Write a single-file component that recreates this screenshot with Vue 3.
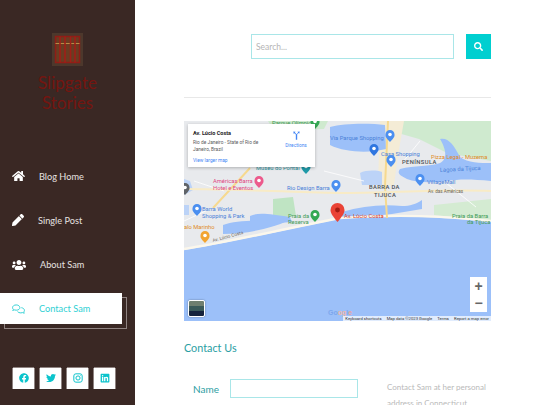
<template>
  <div class="page">
    <!-- Sidebar -->
    <aside class="side">
      <div class="logo">
        <svg viewBox="0 0 31 33" width="31" height="33" aria-hidden="true">
          <rect width="31" height="33" fill="#4d382c" />
          <rect x="3.500" y="3.500" width="24" height="26" fill="#6a3c22" stroke="#8f1d16" stroke-width="1.500" />
          <path d="M3.500 10.500h24" stroke="#b98a45" stroke-width="1" />
          <path d="M8 3.500v26M13 3.500v26M18.500 3.500v26M23 3.500v26" stroke="#a01f18" stroke-width="1.600" />
        </svg>
      </div>
      <h1 class="brand">Slipgate<br />Stories</h1>

      <nav class="nav">
        <a v-for="item in navItems" :key="item.label" class="nav-item" :class="{ 'nav-item--active': item.active }">
          <svg class="nav-icon" :viewBox="item.box" :style="{ width: item.w + 'px' }" aria-hidden="true">
            <path v-if="item.d" :d="item.d" fill="currentColor" />
            <g v-else fill="none" stroke="currentColor" stroke-width="48">
              <path d="M208 56C100 56 28 112 28 190c0 34 16 62 40 84-6 22-18 38-34 54 32-2 60-14 80-28 28 10 60 14 94 14 108 0 180-56 180-124S316 56 208 56z" />
              <path d="M460 190c90 14 152 70 152 134 0 34-16 62-40 84 6 22 18 38 34 54-32-2-60-14-80-28-28 10-60 14-94 14-70 0-130-24-160-64" />
            </g>
          </svg>
          <span>{{ item.label }}</span>
        </a>
      </nav>

      <div class="socials">
        <a class="social"><svg viewBox="0 0 512 512"><path :d="icons.facebook" /></svg></a>
        <a class="social"><svg viewBox="0 0 512 512"><path :d="icons.twitter" /></svg></a>
        <a class="social">
          <svg viewBox="0 0 24 24" class="insta">
            <rect x="2" y="2" width="20" height="20" rx="5" />
            <circle cx="12" cy="12" r="5" />
            <circle cx="18" cy="6" r="1" class="insta-dot" />
          </svg>
        </a>
        <a class="social"><svg viewBox="0 0 448 512"><path :d="icons.linkedin" /></svg></a>
      </div>
    </aside>

    <!-- Main column -->
    <main class="main">
      <form class="search" @submit.prevent>
        <input class="search-input" type="text" placeholder="Search..." />
        <button class="search-btn" type="submit" aria-label="Search">
          <svg viewBox="0 0 512 512"><path :d="icons.search" /></svg>
        </button>
      </form>

      <hr class="rule" />

      <div class="map">
        <svg class="map-art" viewBox="0 0 307 200" width="307" height="200">
          <rect width="307" height="200" fill="#e8eaed" />
          <!-- green -->
          <path d="M214 0h93v40l-44-8-28-14-21-6z" fill="#cfeacf" />
          <path d="M84 0h60l-4 8-50 2z" fill="#cfeacf" />
          <path d="M89 78l20-2 3 19-23 2z" fill="#bfe4c3" />
          <path d="M250 84l57-6v22l-57-6z" fill="#d4ebd2" />
          <!-- sand -->
          <path d="M196 0h24l-6 34-4 30h-16z" fill="#f4ecd6" />
          <!-- lagoons -->
          <path d="M146 6c14-4 40-4 55-2l1 24c-15 4-40 4-56-4z" fill="#9cc0f9" />
          <path d="M216 48c14-4 30-2 40-6 8-4 6-14 0-24 8-2 14 6 20 18 8 6 20 6 31 6v18c-20-2-32-2-44 0-14 2-30 2-40-2-8-4-10-6-7-10z" fill="#9cc0f9" />
          <path d="M176 52c6-3 16-3 22-1v13h-20z" fill="#bcd3f7" />
          <path d="M158 91c20-6 40-8 60-6 8 0 14-2 20-6v9l-30 5c-20 2-30 2-50 5z" fill="#9cc0f9" />
          <path d="M66 95c8-4 20-2 40 1l2 5-42 3z" fill="#9cc0f9" />
          <path d="M39 104c14-5 40-5 64-4-14 7-40 13-64 13z" fill="#9cc0f9" />
          <path d="M0 58l6 2 3 9-9 5zM0 84h5v10H0z" fill="#bcd3f7" />
          <!-- ocean -->
          <path d="M0 129c40-6 90-18 156-31 60-4 100-2 151 3v99H0z" fill="#9cc0f9" />
          <path d="M0 128c40-6 90-18 156-31 60-4 100-2 151 3" fill="none" stroke="#fbf7ec" stroke-width="2.400" />
          <!-- roads -->
          <path d="M204 0l-3 65 2 32M29 87l37-40" fill="none" stroke="#f6d98f" stroke-width="2" />
          <path d="M0 68c50 0 100 3 156 4 50 0 100-4 151-2" fill="none" stroke="#f8ebc6" stroke-width="2" />
          <path d="M10 60l30 10M0 100l26-12M140 50l40 10M236 20l-18 22M262 62l30 24" fill="none" stroke="#fff" stroke-width="0.800" />

          <g class="map-labels">
            <text x="88" y="4" class="green">Parque Olímpico</text>
            <text x="146" y="19" class="blue">Via Parque Shopping</text>
            <text x="72" y="49" class="teal">Museu do Pontal</text>
            <text x="29" y="62" class="pink">Américas Barra</text>
            <text x="29" y="68.500" class="pink">Hotel e Eventos</text>
            <text x="103" y="69" class="blue">Rio Design Barra</text>
            <text x="18" y="90" class="blue">Barra World</text>
            <text x="18" y="96.500" class="blue">Shopping &amp; Park</text>
            <text x="104" y="97" class="green">Praia da</text>
            <text x="104" y="103" class="green">Reserva</text>
            <text x="0" y="108" class="orange">alo Marinho</text>
            <text x="197" y="35" class="blue">Casa Shopping</text>
            <text x="218" y="43" class="dark bold">PENÍNSULA</text>
            <text x="247" y="38" class="orange">Pizza Legal - Muzema</text>
            <text x="256" y="51" class="blue" transform="rotate(-3 256 51)">Lagoa da Tijuca</text>
            <text x="243" y="63" class="blue">VillageMall</text>
            <text x="185" y="68" class="dark bold">BARRA DA</text>
            <text x="190" y="75.500" class="dark bold">TIJUCA</text>
            <text x="244" y="72" class="road">Av. das Américas</text>
            <text x="160" y="97" class="red">Av. Lúcio Costa</text>
            <text x="268" y="97" class="green">Praia da Barra</text>
            <text x="283" y="103" class="green">da Tijuca</text>
            <text x="29" y="121" class="road" transform="rotate(-15 29 121)">Av. Lúcio Costa</text>
          </g>

          <!-- pins -->
          <g v-for="p in pins" :key="p.x + '-' + p.y">
            <path :d="`M${p.x} ${p.y + 6}c-5-5-4.500-6-4.500-7.500a4.500 4.500 0 0 1 9 0c0 1.500 .5 2.500-4.500 7.500z`" :fill="p.c" />
            <circle :cx="p.x" :cy="p.y - 1.500" r="1.800" fill="#fff" />
          </g>
          <path d="M153.500 101c-5-6-7-9-7-12a7 7 0 0 1 14 0c0 3-2 6-7 12z" fill="#ea4335" />
          <circle cx="153.500" cy="89" r="2.400" fill="#a51d12" />
        </svg>

        <div class="place-card">
          <div class="place-info">
            <p class="place-name">Av. Lúcio Costa</p>
            <p class="place-addr">Rio de Janeiro - State of Rio de Janeiro, Brazil</p>
            <a class="place-link">View larger map</a>
          </div>
          <a class="directions">
            <svg viewBox="0 0 24 24" width="11" height="11"><path d="M5 3l5 1-1.500 1.500 3.500 3.500 3.500-3.500L14 4l5-1-1 5-1.500-1.500-3 3V21h-3V10l-3-3L6 8.500z" fill="#4285f4" /></svg>
            <span>Directions</span>
          </a>
        </div>

        <div class="thumb"></div>
        <div class="google"><span style="color:#7da7ee">Go</span><span style="color:#efb6a6">og</span><span style="color:#7da7ee">l</span><span style="color:#e8a29a">e</span></div>

        <div class="zoom-ctrl">
          <span class="zoom-btn">+</span>
          <span class="zoom-btn">−</span>
        </div>

        <div class="attrib">
          <span>Keyboard shortcuts</span>
          <span>Map data ©2023 Google</span>
          <span>Terms</span>
          <span>Report a map error</span>
        </div>
      </div>

      <h2 class="contact-title">Contact Us</h2>

      <div class="contact">
        <label class="field">
          <span class="field-label">Name</span>
          <input class="field-input" type="text" />
        </label>
        <p class="contact-note">Contact Sam at her personal address in Connecticut</p>
      </div>
    </main>
  </div>
</template>

<script setup>
const icons = {
  home: "M280.37 148.26L96 300.11V464a16 16 0 0 0 16 16l112.06-.29a16 16 0 0 0 15.92-16V368a16 16 0 0 1 16-16h64a16 16 0 0 1 16 16v95.64a16 16 0 0 0 16 16.05L464 480a16 16 0 0 0 16-16V300L295.67 148.26a12.19 12.19 0 0 0-15.3 0zM571.6 251.47L488 182.56V44.05a12 12 0 0 0-12-12h-56a12 12 0 0 0-12 12v72.61L318.47 43a48 48 0 0 0-61 0L4.34 251.47a12 12 0 0 0-1.6 16.9l25.5 31A12 12 0 0 0 45.15 301l235.22-193.74a12.19 12.19 0 0 1 15.3 0L530.9 301a12 12 0 0 0 16.9-1.6l25.5-31a12 12 0 0 0-1.7-16.93z",
  pen: "M497.9 142.1l-46.1 46.1c-4.7 4.7-12.3 4.7-17 0l-111-111c-4.7-4.7-4.7-12.3 0-17l46.1-46.1c18.7-18.7 49.1-18.7 67.9 0l60.1 60.1c18.8 18.7 18.8 49.1 0 67.9zM284.2 99.8L21.6 362.4.4 483.9c-2.9 16.4 11.4 30.6 27.8 27.8l121.5-21.3 262.6-262.6c4.7-4.7 4.7-12.3 0-17l-111-111c-4.8-4.7-12.4-4.7-17.1 0z",
  users: "M96 224c35.3 0 64-28.7 64-64s-28.7-64-64-64-64 28.7-64 64 28.7 64 64 64zm448 0c35.3 0 64-28.7 64-64s-28.7-64-64-64-64 28.7-64 64 28.7 64 64 64zm32 32h-64c-17.6 0-33.5 7.1-45.1 18.6 40.3 22.1 68.9 62 75.1 109.4h66c17.7 0 32-14.3 32-32v-32c0-35.3-28.7-64-64-64zm-256 0c61.9 0 112-50.1 112-112S381.9 32 320 32 208 82.1 208 144s50.1 112 112 112zm76.8 32h-8.3c-20.8 10-43.9 16-68.5 16s-47.6-6-68.5-16h-8.3C179.6 288 128 339.6 128 403.2V432c0 26.5 21.5 48 48 48h288c26.5 0 48-21.5 48-48v-28.8c0-63.6-51.6-115.2-115.2-115.2zm-223.7-13.4C161.5 263.1 145.6 256 128 256H64c-35.3 0-64 28.7-64 64v32c0 17.7 14.3 32 32 32h65.9c6.3-47.4 34.9-87.3 75.2-109.4z",
  facebook: "M504 256C504 119 393 8 256 8S8 119 8 256c0 123.78 90.69 226.38 209.25 245V327.69h-63V256h63v-54.64c0-62.15 37-96.48 93.67-96.48 27.14 0 55.52 4.84 55.52 4.84v61h-31.28c-30.8 0-40.41 19.12-40.41 38.73V256h68.78l-11 71.69h-57.78V501C413.31 482.38 504 379.78 504 256z",
  twitter: "M459.37 151.716c.325 4.548.325 9.097.325 13.645 0 138.72-105.583 298.558-298.558 298.558-59.452 0-114.68-17.219-161.137-47.106 8.447.974 16.568 1.299 25.34 1.299 49.055 0 94.213-16.568 130.274-44.832-46.132-.975-84.792-31.188-98.112-72.772 6.498.974 12.995 1.624 19.818 1.624 9.421 0 18.843-1.3 27.614-3.573-48.081-9.747-84.143-51.98-84.143-102.985v-1.299c13.969 7.797 30.214 12.67 47.431 13.319-28.264-18.843-46.781-51.005-46.781-87.391 0-19.492 5.197-37.36 14.294-52.954 51.655 63.675 129.3 105.258 216.365 109.807-1.624-7.797-2.599-15.918-2.599-24.04 0-57.828 46.782-104.934 104.934-104.934 30.213 0 57.502 12.67 76.67 33.137 23.715-4.548 46.456-13.32 66.599-25.34-7.798 24.366-24.366 44.833-46.132 57.827 21.117-2.273 41.584-8.122 60.426-16.243-14.292 20.791-32.161 39.308-52.628 54.253z",
  linkedin: "M416 32H31.9C14.3 32 0 46.5 0 64.3v383.4C0 465.5 14.3 480 31.9 480H416c17.6 0 32-14.5 32-32.3V64.3c0-17.8-14.4-32.3-32-32.3zM135.4 416H69V202.2h66.5V416zm-33.2-243c-21.3 0-38.5-17.3-38.5-38.5S80.9 96 102.2 96c21.2 0 38.5 17.3 38.5 38.5 0 21.3-17.2 38.5-38.5 38.5zm282.1 243h-66.4V312c0-24.8-.5-56.7-34.5-56.7-34.6 0-39.9 27-39.9 54.9V416h-66.4V202.2h63.7v29.2h.9c8.9-16.8 30.6-34.5 62.9-34.5 67.2 0 79.7 44.3 79.7 101.9V416z",
  search: "M505 442.7L405.3 343c-4.5-4.5-10.6-7-17-7H372c27.6-35.3 44-79.7 44-128C416 93.1 322.9 0 208 0S0 93.1 0 208s93.1 208 208 208c48.3 0 92.7-16.4 128-44v16.3c0 6.4 2.5 12.5 7 17l99.7 99.7c9.4 9.4 24.6 9.4 33.9 0l28.3-28.3c9.4-9.4 9.4-24.6.1-34zM208 336c-70.7 0-128-57.2-128-128 0-70.7 57.2-128 128-128 70.7 0 128 57.2 128 128 0 70.7-57.2 128-128 128z",
};

const navItems = [
  { label: "Blog Home", box: "0 0 576 512", w: 13, d: icons.home },
  { label: "Single Post", box: "0 0 512 512", w: 12, d: icons.pen },
  { label: "About Sam", box: "0 0 640 512", w: 14, d: icons.users },
  { label: "Contact Sam", box: "0 0 640 512", w: 13, active: true },
];

const pins = [
  { x: 75, y: 61, c: "#ec5a8c" },
  { x: 152, y: 65, c: "#4b8ff0" },
  { x: 13, y: 89, c: "#4b8ff0" },
  { x: 131, y: 95, c: "#34a853" },
  { x: 21, y: 116, c: "#f2a431" },
  { x: 122, y: 47, c: "#1f9aa8" },
  { x: 206, y: 15, c: "#4b8ff0" },
  { x: 190, y: 29, c: "#2f76e0" },
  { x: 207, y: 40, c: "#4b8ff0" },
  { x: 236, y: 59, c: "#4b8ff0" },
  { x: 1, y: 68, c: "#5f6368" },
  { x: 131, y: 2, c: "#34a853" },
];
</script>

<style>
html,
body {
  background: #fff;
}
</style>

<style scoped>
.page {
  display: flex;
  width: 540px;
  height: 405px;
  overflow: hidden;
  background: #fff;
  font-family: "Lato", "Noto Sans", sans-serif;
}

/* Sidebar */
.side {
  flex: 0 0 135px;
  box-sizing: border-box;
  padding-top: 33px;
  background: #3a2824;
}
.logo {
  display: flex;
  justify-content: center;
}
.logo svg {
  display: block;
}
.brand {
  margin: 7px 0 0;
  font-size: 17px;
  font-weight: 400;
  line-height: 20px;
  text-align: center;
  color: #751510;
}
.nav {
  display: flex;
  flex-direction: column;
  margin-top: 47.500px;
}
.nav-item {
  display: flex;
  align-items: center;
  height: 31px;
  margin-bottom: 13.330px;
  padding-left: 12px;
  font-size: 9.200px;
  color: #e6e2e0;
}
.nav-item span {
  margin-left: 14px;
}
.nav-icon {
  flex: none;
  height: 12px;
  color: #fff;
}
.nav-item--active {
  position: relative;
  isolation: isolate;
  width: 122px;
  box-sizing: border-box;
  color: #2fd0d4;
}
.nav-item--active .nav-icon {
  color: #2fd0d4;
}
.nav-item--active::before {
  content: "";
  position: absolute;
  inset: 0;
  z-index: -1;
  background: #fff;
}
.nav-item--active::after {
  content: "";
  position: absolute;
  left: 4px;
  top: 4px;
  z-index: -2;
  width: 123px;
  height: 32px;
  box-sizing: border-box;
  border: 1px solid #8f8381;
}
.socials {
  display: flex;
  gap: 6px;
  margin-top: 29.700px;
  padding-left: 13px;
}
.social {
  display: flex;
  align-items: center;
  justify-content: center;
  width: 21px;
  height: 21px;
  background: #fff;
  box-shadow: -1px 0 0 #8f8381, 1px 0 0 #8f8381, 0 -1px 0 #8f8381;
}
.social svg {
  width: 10px;
  height: 10px;
  fill: #0cc4cc;
}
.social .insta {
  fill: none;
  stroke: #0cc4cc;
  stroke-width: 2.400;
}
.insta-dot {
  fill: #0cc4cc;
  stroke: none;
}

/* Main */
.main {
  flex: 0 0 307px;
  margin-left: 49px;
  padding-top: 34px;
}
.search {
  display: flex;
  justify-content: flex-end;
  gap: 12px;
}
.search-input {
  width: 203px;
  height: 25px;
  box-sizing: border-box;
  padding: 0 4px;
  border: 1px solid #a9e6e8;
  outline: none;
  font-family: inherit;
  font-size: 8.500px;
  color: #777;
}
.search-input::placeholder {
  color: #b5b5b5;
}
.search-btn {
  display: flex;
  align-items: center;
  justify-content: center;
  width: 25px;
  height: 25px;
  padding: 0;
  border: 0;
  background: #00cfd0;
}
.search-btn svg {
  width: 9px;
  height: 9px;
  fill: #fff;
}
.rule {
  height: 1px;
  margin: 38px 0 23px;
  border: 0;
  background: #e8e8e8;
}

/* Map */
.map {
  position: relative;
  width: 307px;
  height: 200px;
  overflow: hidden;
}
.map-art {
  display: block;
}
.map-labels text {
  font-family: Roboto, sans-serif;
  font-size: 5.800px;
}
.map-labels .blue { fill: #4a80d8; }
.map-labels .teal { fill: #2a8f9b; }
.map-labels .pink { fill: #e0457f; }
.map-labels .green { fill: #3f9a56; }
.map-labels .orange { fill: #e08a1e; }
.map-labels .dark { fill: #4a4f55; }
.map-labels .bold { font-weight: 500; letter-spacing: 0.400px; }
.map-labels .road { fill: #6b6658; font-size: 4.600px; }
.map-labels .red { fill: #d93a2b; }

.place-card {
  position: absolute;
  left: 4px;
  top: 3px;
  display: flex;
  box-sizing: border-box;
  width: 127px;
  height: 43px;
  padding: 5px;
  background: #fff;
  box-shadow: 0 1px 3px rgba(0, 0, 0, 0.25);
  font-family: Roboto, sans-serif;
}
.place-info {
  flex: 1;
}
.place-name {
  margin: 0;
  font-size: 5.500px;
  font-weight: 700;
  line-height: 8px;
  color: #222;
}
.place-addr {
  margin: 3px 0 0;
  width: 76px;
  font-size: 4.800px;
  line-height: 6.500px;
  color: #5b5b5b;
}
.place-link,
.directions {
  font-size: 4.800px;
  color: #4285f4;
}
.place-link {
  display: block;
  margin-top: 5px;
}
.directions {
  display: flex;
  flex-direction: column;
  align-items: center;
  gap: 2px;
  width: 28px;
  margin-top: 1px;
}
.thumb {
  position: absolute;
  left: 4px;
  bottom: 4px;
  width: 17px;
  height: 17px;
  box-sizing: border-box;
  border: 1px solid #fff;
  border-radius: 2px;
  background: linear-gradient(#6f7f70 0 35%, #3b5a5a 35% 65%, #16233c 65%);
  box-shadow: 0 0 2px rgba(0, 0, 0, 0.4);
}
.google {
  position: absolute;
  left: 144px;
  bottom: 5px;
  font-family: "Liberation Sans", sans-serif;
  font-size: 7px;
  font-weight: 700;
}
.zoom-ctrl {
  position: absolute;
  right: 4px;
  bottom: 9px;
  display: flex;
  flex-direction: column;
  width: 17px;
  background: #fff;
}
.zoom-btn {
  display: flex;
  align-items: center;
  justify-content: center;
  height: 17.500px;
  font-family: "Liberation Sans", sans-serif;
  font-size: 14px;
  font-weight: 700;
  color: #666;
}
.attrib {
  position: absolute;
  right: 0;
  bottom: 0;
  display: flex;
  gap: 5px;
  height: 5px;
  padding: 0 2px;
  background: rgba(255, 255, 255, 0.7);
  font-family: Roboto, sans-serif;
  font-size: 4.200px;
  line-height: 5px;
  white-space: nowrap;
  color: #333;
}

/* Contact */
.contact-title {
  margin: 19px 0 0;
  font-size: 10.800px;
  font-weight: 400;
  line-height: 15px;
  color: #2a9ea3;
}
.contact {
  display: flex;
  margin-top: 24px;
}
.field {
  display: flex;
  align-items: center;
  flex: 0 0 203px;
  padding-left: 9px;
  box-sizing: border-box;
  height: 19px;
}
.field-label {
  width: 37px;
  padding-top: 1px;
  font-size: 10px;
  color: #2a9ea3;
}
.field-input {
  width: 128px;
  height: 19px;
  box-sizing: border-box;
  border: 1px solid #a9e6e8;
  outline: none;
}
.contact-note {
  margin: 0;
  flex: none;
  width: 104px;
  font-size: 8px;
  line-height: 16px;
  color: #b9b9b9;
}
</style>
